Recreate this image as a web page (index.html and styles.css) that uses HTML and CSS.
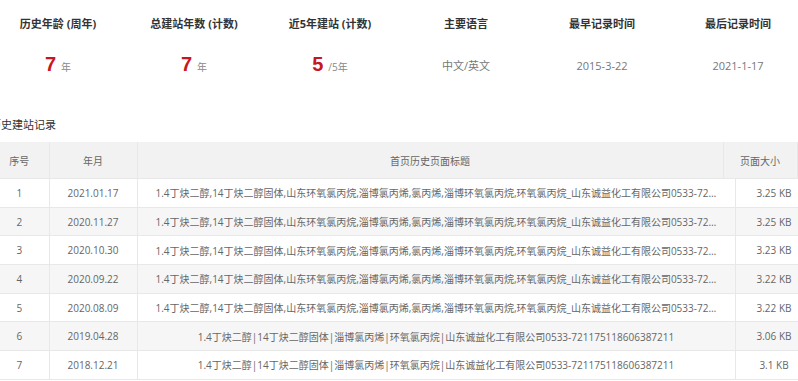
FILE: index.html
```html
<!DOCTYPE html>
<html lang="zh">
<head>
<meta charset="utf-8">
<title>历史建站记录</title>
<link rel="stylesheet" href="styles.css">
</head>
<body>
<div class="page">
  <div class="stats">
    <div class="stat"><div class="label">历史年龄 (周年)</div><div class="value"><span class="num">7</span><span class="unit">年</span></div></div>
    <div class="stat"><div class="label">总建站年数 (计数)</div><div class="value"><span class="num">7</span><span class="unit">年</span></div></div>
    <div class="stat"><div class="label">近5年建站 (计数)</div><div class="value"><span class="num">5</span><span class="unit">/5年</span></div></div>
    <div class="stat"><div class="label">主要语言</div><div class="value text">中文/英文</div></div>
    <div class="stat"><div class="label">最早记录时间</div><div class="value text">2015-3-22</div></div>
    <div class="stat"><div class="label">最后记录时间</div><div class="value text">2021-1-17</div></div>
  </div>
  <h3 class="section-title">历史建站记录</h3>
  <table class="grid grid-head">
    <colgroup><col class="c-no"><col class="c-date"><col class="c-title-h"><col class="c-size-h"></colgroup>
    <tr><th>序号</th><th>年月</th><th>首页历史页面标题</th><th>页面大小</th></tr>
  </table>
  <table class="grid grid-body">
    <colgroup><col class="c-no"><col class="c-date"><col class="c-title"><col class="c-size"></colgroup>
    <tr><td>1</td><td>2021.01.17</td><td class="t">1.4丁炔二醇,14丁炔二醇固体,山东环氧氯丙烷,淄博氯丙烯,氯丙烯,淄博环氧氯丙烷,环氧氯丙烷_山东诚益化工有限公司0533-721175118606387211</td><td>3.25 KB</td></tr>
    <tr><td>2</td><td>2020.11.27</td><td class="t">1.4丁炔二醇,14丁炔二醇固体,山东环氧氯丙烷,淄博氯丙烯,氯丙烯,淄博环氧氯丙烷,环氧氯丙烷_山东诚益化工有限公司0533-721175118606387211</td><td>3.25 KB</td></tr>
    <tr><td>3</td><td>2020.10.30</td><td class="t">1.4丁炔二醇,14丁炔二醇固体,山东环氧氯丙烷,淄博氯丙烯,氯丙烯,淄博环氧氯丙烷,环氧氯丙烷_山东诚益化工有限公司0533-721175118606387211</td><td>3.23 KB</td></tr>
    <tr><td>4</td><td>2020.09.22</td><td class="t">1.4丁炔二醇,14丁炔二醇固体,山东环氧氯丙烷,淄博氯丙烯,氯丙烯,淄博环氧氯丙烷,环氧氯丙烷_山东诚益化工有限公司0533-721175118606387211</td><td>3.22 KB</td></tr>
    <tr><td>5</td><td>2020.08.09</td><td class="t">1.4丁炔二醇,14丁炔二醇固体,山东环氧氯丙烷,淄博氯丙烯,氯丙烯,淄博环氧氯丙烷,环氧氯丙烷_山东诚益化工有限公司0533-721175118606387211</td><td>3.22 KB</td></tr>
    <tr><td>6</td><td>2019.04.28</td><td class="t">1.4丁炔二醇|14丁炔二醇固体|淄博氯丙烯|环氧氯丙烷|山东诚益化工有限公司0533-721175118606387211</td><td>3.06 KB</td></tr>
    <tr><td>7</td><td>2018.12.21</td><td class="t">1.4丁炔二醇|14丁炔二醇固体|淄博氯丙烯|环氧氯丙烷|山东诚益化工有限公司0533-721175118606387211</td><td>3.1 KB</td></tr>
  </table>
</div>
</body>
</html>
```
FILE: styles.css
```css
html, body {
  margin: 0;
  padding: 0;
  overflow: hidden;
  background: #fff;
}
body {
  font-family: "Open Sans", "Noto Sans CJK SC", sans-serif;
  color: #666;
  font-size: 10px;
}
.page {
  margin-left: -10px;
  width: 823px;
}
.stats {
  display: grid;
  grid-template-columns: repeat(6, 136px);
  padding-top: 15px;
}
.stat {
  text-align: center;
}
.label {
  font-size: 11px;
  font-weight: bold;
  color: #333;
  line-height: 18px;
  height: 18px;
}
.value {
  margin-top: 20px;
  height: 22px;
  line-height: 22px;
}
.num {
  font-family: "Liberation Sans", sans-serif;
  font-weight: bold;
  font-size: 20px;
  color: #c8161e;
}
.unit {
  font-size: 10px;
  color: #888;
  margin-left: 5px;
}
.value.text {
  font-size: 11px;
  color: #777;
  line-height: 26px;
}
.section-title {
  margin: 41px 0 8px;
  font-size: 11px;
  font-weight: normal;
  color: #333;
  line-height: 18px;
  height: 18px;
}
.grid {
  border-collapse: collapse;
  table-layout: fixed;
}
.grid-head { width: 807px; }
.grid-body { width: 823px; }
.c-no { width: 59px; }
.c-date { width: 88px; }
.c-title-h { width: 586px; }
.c-size-h { width: 74px; }
.c-title { width: 598px; }
.c-size { width: 78px; }
.grid th, .grid td {
  border: 1px solid #e8e8e8;
  text-align: center;
  padding: 0 8px;
  white-space: nowrap;
  overflow: hidden;
  text-overflow: ellipsis;
  color: #666;
  font-weight: normal;
}
.grid th {
  background: #f2f2f2;
  height: 36px;
  border-top: 0;
}
.grid-body tr:first-child td { border-top: 0; }
.grid td { height: 27.7px; }
.grid td.t { padding: 0 18px; }
.grid-body tr:nth-child(even) td { background: #f6f6f6; }
.grid th:first-child, .grid td:first-child { border-left: 0; }
```
